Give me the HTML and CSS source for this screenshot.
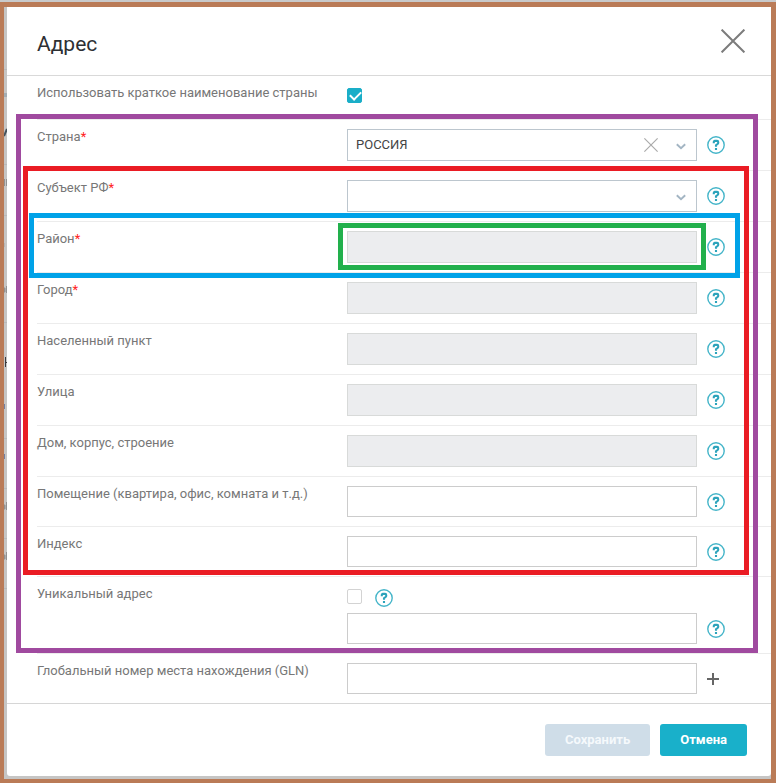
FILE: index.html
```html
<!DOCTYPE html>
<html lang="ru">
<head>
<meta charset="utf-8">
<title>Адрес</title>
<link rel="stylesheet" href="styles.css">
</head>
<body>
<svg class="sprite" aria-hidden="true">
  <symbol id="help" viewBox="0 0 18 18"><circle cx="9" cy="9" r="8.2" fill="none" stroke="#45b5c9" stroke-width="1.4"/><path d="M6.8 7.2V5.9Q6.8 4.9 7.8 4.9H10.1Q11.2 4.9 11.2 5.9V7Q11.2 7.6 10.6 8L9 9.2V10.8M9 11.9V13.9" fill="none" stroke="#2ba3bb" stroke-width="2.1"/></symbol>
  <symbol id="chevron" viewBox="0 0 10 7"><path d="M.8 1.2L5 5.2L9.2 1.2" fill="none" stroke="#a3b5c3" stroke-width="1.9"/></symbol>
  <symbol id="cross" viewBox="0 0 24 24"><path d="M.6 .6L23.4 23.4M23.4 .6L.6 23.4" fill="none" stroke="currentColor"/></symbol>
</svg>
<div class="page">
  <svg class="backdrop" viewBox="0 0 3 769" aria-hidden="true">
    <path d="M0 62.5H3M0 157.5H3M0 208.5H3M0 315.5H3M0 431.5H3M0 481.5H3M0 531.5H3M0 581.5H3" stroke="#b8b9ba"/>
    <path d="M0 86h3v4H0z" fill="#a3adb3"/>
    <path d="M0 129L3 122" stroke="#45525c" stroke-width="2"/>
    <path d="M.5 172v7M2.5 172v7M0 281h1v4H0zM2.5 279v7M0 498h1v4H0zM2.5 495v8M0 548h1v4H0zM2.5 545v8" fill="#8c8c8c" stroke="#929292"/>
    <path d="M0 236v4" stroke="#a5a5a5"/>
    <path d="M1.5 350v10M1 355.5h2" stroke="#3a3a3e"/>
    <path d="M.5 397v5M.5 447v5" stroke="#7380a3"/>
  </svg>
  <main class="modal">
    <header class="modal-header">
      <h1>Адрес</h1>
      <button class="close" type="button" aria-label="Закрыть"><svg><use href="#cross"/></svg></button>
    </header>
    <form>
      <div class="row row-check">
        <label for="short">Использовать краткое наименование страны</label>
        <div class="control"><input type="checkbox" id="short" checked></div>
      </div>
      <div class="group group-country">
        <div class="row">
          <label for="country">Страна<span class="req">*</span></label>
          <div class="control select">
            <select id="country"><option>РОССИЯ</option></select>
            <button class="clear" type="button" aria-label="Очистить"><svg><use href="#cross"/></svg></button>
            <svg class="chevron"><use href="#chevron"/></svg>
          </div>
          <button class="help" type="button" aria-label="Справка"><svg><use href="#help"/></svg></button>
        </div>
        <div class="group group-region">
          <div class="row">
            <label for="subject">Субъект РФ<span class="req">*</span></label>
            <div class="control select">
              <select id="subject"><option></option></select>
              <svg class="chevron"><use href="#chevron"/></svg>
            </div>
            <button class="help" type="button" aria-label="Справка"><svg><use href="#help"/></svg></button>
          </div>
          <div class="group group-district">
            <div class="row">
              <label for="district">Район<span class="req">*</span></label>
              <div class="control group group-field"><select id="district" disabled></select></div>
              <button class="help" type="button" aria-label="Справка"><svg><use href="#help"/></svg></button>
            </div>
          </div>
          <div class="row">
            <label for="city">Город<span class="req">*</span></label>
            <div class="control"><select id="city" disabled></select></div>
            <button class="help" type="button" aria-label="Справка"><svg><use href="#help"/></svg></button>
          </div>
          <div class="row">
            <label for="town">Населенный пункт</label>
            <div class="control"><select id="town" disabled></select></div>
            <button class="help" type="button" aria-label="Справка"><svg><use href="#help"/></svg></button>
          </div>
          <div class="row">
            <label for="street">Улица</label>
            <div class="control"><select id="street" disabled></select></div>
            <button class="help" type="button" aria-label="Справка"><svg><use href="#help"/></svg></button>
          </div>
          <div class="row">
            <label for="house">Дом, корпус, строение</label>
            <div class="control"><select id="house" disabled></select></div>
            <button class="help" type="button" aria-label="Справка"><svg><use href="#help"/></svg></button>
          </div>
          <div class="row">
            <label for="room">Помещение (квартира, офис, комната и т.д.)</label>
            <div class="control"><input type="text" id="room"></div>
            <button class="help" type="button" aria-label="Справка"><svg><use href="#help"/></svg></button>
          </div>
          <div class="row">
            <label for="zip">Индекс</label>
            <div class="control"><input type="text" id="zip"></div>
            <button class="help" type="button" aria-label="Справка"><svg><use href="#help"/></svg></button>
          </div>
        </div>
        <div class="row row-unique">
          <label for="unique">Уникальный адрес</label>
          <div class="control">
            <div class="check-line">
              <input type="checkbox" id="unique">
              <button class="help" type="button" aria-label="Справка"><svg><use href="#help"/></svg></button>
            </div>
            <input type="text" aria-label="Уникальный адрес">
          </div>
          <button class="help" type="button" aria-label="Справка"><svg><use href="#help"/></svg></button>
        </div>
      </div>
      <div class="row row-last">
        <label for="gln">Глобальный номер места нахождения (GLN)</label>
        <div class="control"><input type="text" id="gln"></div>
        <button class="add" type="button" aria-label="Добавить"><svg viewBox="0 0 12 12"><path d="M6 0V12M0 6H12" stroke="#666" stroke-width="2"/></svg></button>
      </div>
      <footer class="modal-footer">
        <button class="btn" type="submit" disabled>Сохранить</button>
        <button class="btn btn-primary" type="button">Отмена</button>
      </footer>
    </form>
  </main>
</div>
</body>
</html>
```
FILE: styles.css
```css
* { box-sizing: border-box; }
body {
  margin: 0;
  padding-top: 2px;
  background: #c9cacb;
  font: 13px/16px Roboto, "Liberation Sans", sans-serif;
  color: #777;
}
.sprite { position: absolute; width: 0; height: 0; }
.page {
  position: relative;
  border: 5px solid #ba7b57;
  border-width: 5px 5px 4px 4px;
  padding: 0 0 3px 3px;
  background: #c6c5c4;
}
.backdrop { position: absolute; top: 0; left: 0; width: 3px; height: 769px; }
.modal { background: #fff; border-radius: 0 0 3px 3px; }
.modal-header {
  display: flex;
  justify-content: space-between;
  align-items: center;
  height: 69px;
  padding: 0 26px 0 30px;
  border-bottom: 1px solid #d9d9d9;
}
h1 { margin: 0; padding-top: 6px; font-size: 21px; line-height: 24px; font-weight: 400; color: #2d2f33; }
button { display: block; padding: 0; border: 0; background: none; font: inherit; }
svg { display: block; }
.close, .close svg { width: 24px; height: 24px; color: #7c7c7c; stroke-width: 2px; }
.row {
  display: grid;
  grid-template-columns: 310px 1fr 64px;
  margin-left: 30px;
  padding: 9px 0;
  border-bottom: 1px solid #ececec;
}
.req { color: #f22; }
.control { min-width: 0; margin-right: 10px; }
.row-check { padding-bottom: 16px; }
.row-check .control { padding-top: 3px; }
.row-last { border-bottom: 0; }
select, input[type="text"] {
  display: block;
  width: 100%;
  height: 32px;
  margin: 0;
  padding: 0 8px;
  border: 1px solid #bcc6ce;
  border-radius: 0;
  background: #fff;
  font: inherit;
  color: #444;
  appearance: none;
}
input[type="text"] { height: 31px; border-color: #ccc; }
select:disabled { background: #ecedef; border-color: #d8dad9; opacity: 1; }
input[type="checkbox"] {
  display: block;
  width: 15px;
  height: 15px;
  margin: 0;
  border: 1px solid #d3d3d3;
  border-radius: 2px;
  background: #fff;
  appearance: none;
}
input[type="checkbox"]:checked { border-color: #1aaec8; background: #1aaec8; }
input[type="checkbox"]:checked::after {
  content: "";
  display: block;
  width: 9px;
  height: 5px;
  margin: 3px 2px;
  border: solid #fff;
  border-width: 0 0 2px 2px;
  transform: translateY(-1px) rotate(-45deg);
}
.select { position: relative; }
.clear { position: absolute; top: 9px; right: 39px; color: #aaa; stroke-width: 2px; }
.clear svg { width: 14px; height: 14px; }
.chevron { position: absolute; top: 14px; right: 11px; width: 10px; height: 7px; }
.help { align-self: center; width: 18px; height: 18px; }
.help svg { width: 18px; height: 18px; }
.check-line { display: flex; gap: 13px; margin: 3px 0 6px; }
.row-unique > .help { align-self: end; margin-bottom: 6px; }
.add { align-self: center; width: 12px; height: 12px; }
.group { position: relative; }
.group::after { content: ""; position: absolute; border: 5px solid; pointer-events: none; }
.group-country::after { inset: -6px 13px 1px 9px; border-color: #a04a9f; }
.group-region::after { inset: -5px 22px 2px 16px; border-color: #ea1c24; }
.group-district::after { inset: -9px 31px -5px 22px; border-color: #00a2e8; z-index: 1; }
.group-field::after { inset: -8px -9px -7px; border-color: #22b04c; }
.modal-footer {
  display: flex;
  justify-content: flex-end;
  gap: 10px;
  padding: 20px 24px 20px 30px;
  border-top: 1px solid #d6d6d6;
}
.btn {
  height: 32px;
  padding: 0 20px;
  border-radius: 3px;
  background: #19b0ca;
  color: #fff;
  font-weight: 700;
}
.btn:disabled { background: #cfdde8; color: #f5f9fc; }
```
